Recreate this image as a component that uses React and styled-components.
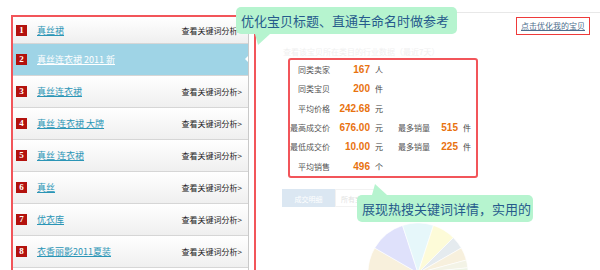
import React from 'react';
import styled, { createGlobalStyle } from 'styled-components';

const GlobalStyle = createGlobalStyle`
    body {
        margin: 0;
        background: #fff;
        font-family: "Noto Sans CJK SC", "Liberation Sans", sans-serif;
    }
`;

const Page = styled.div`
    position: relative;
    width: 600px;
    height: 270px;
    overflow: hidden;
    display: flex;
    align-items: flex-start;
`;

const RedFrame = styled.div`
    margin: 15px 0 0 11px;
    width: 241px;
    height: 260px;
    border: 2px solid #f2555a;
    border-bottom: none;
`;

const List = styled.div`
    width: 235px;
    height: 100%;
    border-right: 1px solid #c9c9c9;
`;

const Row = styled.div`
    position: relative;
    height: ${(p) => (p.first ? '26px' : '31px')};
    display: flex;
    align-items: center;
    padding: 0 6px 0 3px;
    border-bottom: 1px solid #d6d6d6;
    background: ${(p) => (p.active ? '#9fd4e6' : 'linear-gradient(#ffffff, #efefef)')};

    ${(p) => p.active && `
        &:after {
            content: "";
            position: absolute;
            right: 0;
            top: 12px;
            border: 3px solid transparent;
            border-right-color: #fff;
        }
    `}
`;

const Badge = styled.span`
    width: 11px;
    height: 11px;
    flex: none;
    background: #b3120e;
    color: #fff;
    font: bold 9px/11px "Liberation Serif", serif;
    text-align: center;
`;

const Title = styled.a`
    margin-left: 10px;
    flex: 1;
    font-size: 9px;
    color: ${(p) => (p.active ? '#fff' : '#2b95b6')};
    text-decoration: underline;
    white-space: nowrap;
`;

const Analyse = styled.span`
    font-size: 8px;
    color: #222;
    white-space: nowrap;
`;

const Right = styled.div`
    flex: 1;
    display: flex;
    flex-direction: column;
`;

const TopRule = styled.div`
    margin-top: 12px;
    border-top: 1px solid #e8e8e8;
`;

const MyLink = styled.a`
    align-self: flex-end;
    margin: 4px 10px 0 0;
    height: 16px;
    padding: 0 4px;
    border: 1px solid #ee3a3a;
    font-size: 8px;
    line-height: 16px;
    color: #4d6d8c;
    text-decoration: underline;
`;

const Caption = styled.div`
    margin: 12px 0 0 27px;
    height: 10px;
    font-size: 8px;
    line-height: 10px;
    color: #f0f0f0;
`;

const Stats = styled.div`
    margin: 1px 0 0 32px;
    width: 186px;
    height: 116px;
    border: 2px solid #f2555a;
    border-radius: 3px;
    display: grid;
    grid-template-columns: 40px 40px 24px 36px 28px 20px;
    grid-auto-rows: 19.33px;
    align-items: center;
`;

const Label = styled.span`
    font-size: 8px;
    color: #555;
    text-align: ${(p) => (p.left ? 'left' : 'right')};
    padding-left: ${(p) => (p.left ? '4px' : '0')};
    white-space: nowrap;
`;

const Value = styled.span`
    font: bold 10px "Liberation Sans", sans-serif;
    color: #e8720f;
    text-align: right;
`;

const Unit = styled.span`
    font-size: 8px;
    color: #444;
    padding-left: 5px;
`;

const Tabs = styled.div`
    margin: 11px 0 0 26px;
    display: flex;
    height: 18px;
`;

const Tab = styled.span`
    width: ${(p) => p.w}px;
    font-size: 7px;
    line-height: 18px;
    text-align: center;
    background: ${(p) => (p.on ? '#dbe7f2' : '#fff')};
    color: ${(p) => (p.on ? '#fff' : '#e2e2e2')};
    border: 1px solid ${(p) => (p.on ? '#dbe7f2' : '#f2f2f2')};
`;

const Pie = styled.svg`
    margin: 16px 0 0 112px;
    display: block;
`;

const Bubble = styled.div`
    position: absolute;
    left: ${(p) => p.x}px;
    top: ${(p) => p.y}px;
    width: ${(p) => p.w}px;
    height: 27px;
    padding-left: 5px;
    box-sizing: border-box;
    background: #b6f4cf;
    border-radius: 5px;
    font-size: 13px;
    line-height: 27px;
    color: #265b8c;
    white-space: nowrap;

    &:after {
        content: "";
        position: absolute;
        left: ${(p) => p.tailX}px;
        ${(p) => (p.up ? 'bottom: 100%;' : 'top: 100%;')}
        border-left: 3px solid transparent;
        border-right: 12px solid transparent;
        ${(p) => (p.up ? 'border-bottom' : 'border-top')}: 11px solid #b6f4cf;
    }
`;

const rows = [
    ['真丝裙'],
    ['真丝连衣裙 2011 新', true],
    ['真丝连衣裙'],
    ['真丝 连衣裙 大牌'],
    ['真丝 连衣裙'],
    ['真丝'],
    ['优衣库'],
    ['衣香丽影2011夏装'],
];

const slices = [
    [180, 150, '#f8f0dc'],
    [150, 108, '#dfe1fb'],
    [108, 72, '#e6f7fa'],
    [72, 45, '#fdfbd8'],
    [45, 30, '#e5ebef'],
    [30, 15, '#f7f0dd'],
    [15, 6, '#f3f3e6'],
    [6, 0, '#eef4e6'],
];

function slicePath(a0, a1) {
    const cx = 50, cy = 50, r = 50;
    const p = (a) => [cx + r * Math.cos((a * Math.PI) / 180), cy - r * Math.sin((a * Math.PI) / 180)];
    const [x0, y0] = p(a0);
    const [x1, y1] = p(a1);
    return `M${cx} ${cy} L${x0.toFixed(2)} ${y0.toFixed(2)} A${r} ${r} 0 0 1 ${x1.toFixed(2)} ${y1.toFixed(2)} Z`;
}

export default function App() {
    return (
        <Page>
            <GlobalStyle />
            <RedFrame>
                <List>
                    {rows.map(([t, active], i) => (
                        <Row key={i} first={i === 0} active={active}>
                            <Badge>{i + 1}</Badge>
                            <Title active={active}>{t}</Title>
                            {!active && <Analyse>查看关键词分析&gt;</Analyse>}
                        </Row>
                    ))}
                </List>
            </RedFrame>
            <Right>
                <TopRule />
                <MyLink>点击优化我的宝贝</MyLink>
                <Caption>查看该宝贝所在类目的行业数据（最近7天）</Caption>
                <Stats>
                    <Label>同类卖家</Label><Value>167</Value><Unit>人</Unit><span /><span /><span />
                    <Label>同类宝贝</Label><Value>200</Value><Unit>件</Unit><span /><span /><span />
                    <Label>平均价格</Label><Value>242.68</Value><Unit>元</Unit><span /><span /><span />
                    <Label>最高成交价</Label><Value>676.00</Value><Unit>元</Unit>
                    <Label left>最多销量</Label><Value>515</Value><Unit>件</Unit>
                    <Label>最低成交价</Label><Value>10.00</Value><Unit>元</Unit>
                    <Label left>最多销量</Label><Value>225</Value><Unit>件</Unit>
                    <Label>平均销售</Label><Value>496</Value><Unit>个</Unit><span /><span /><span />
                </Stats>
                <Tabs>
                    <Tab on w={51}>成交明细</Tab>
                    <Tab w={38}>所有宝贝</Tab>
                </Tabs>
                <Pie width="100" height="50" viewBox="0 0 100 50">
                    {slices.map(([a0, a1, c], i) => (
                        <path key={i} d={slicePath(a0, a1)} fill={c} stroke="#fff" strokeWidth="0.6" />
                    ))}
                </Pie>
            </Right>
            <Bubble x={236} y={7} w={221} tailX={19}>优化宝贝标题、直通车命名时做参考</Bubble>
            <Bubble x={357} y={195} w={176} tailX={15} up>展现热搜关键词详情，实用的</Bubble>
        </Page>
    );
}
